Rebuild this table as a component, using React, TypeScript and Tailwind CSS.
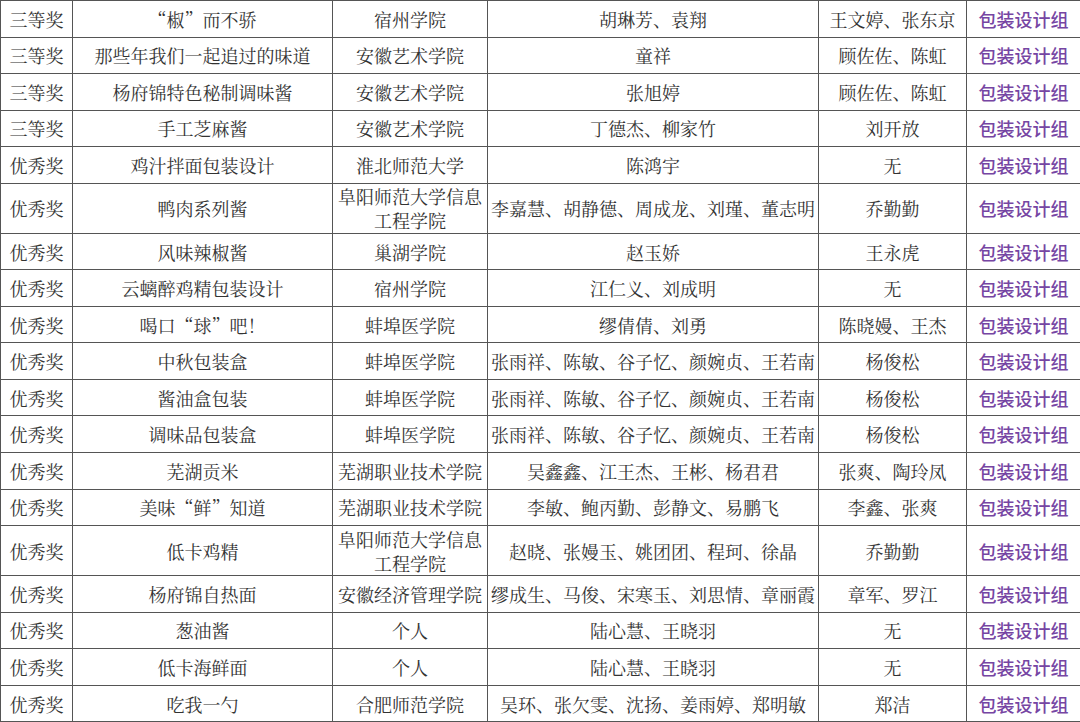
const rows: [string, string, string, string, string, boolean?][] = [
  ['三等奖', '“椒”而不骄', '宿州学院', '胡琳芳、袁翔', '王文婷、张东京'],
  ['三等奖', '那些年我们一起追过的味道', '安徽艺术学院', '童祥', '顾佐佐、陈虹'],
  ['三等奖', '杨府锦特色秘制调味酱', '安徽艺术学院', '张旭婷', '顾佐佐、陈虹'],
  ['三等奖', '手工芝麻酱', '安徽艺术学院', '丁德杰、柳家竹', '刘开放'],
  ['优秀奖', '鸡汁拌面包装设计', '淮北师范大学', '陈鸿宇', '无'],
  ['优秀奖', '鸭肉系列酱', '阜阳师范大学信息工程学院', '李嘉慧、胡静德、周成龙、刘瑾、董志明', '乔勤勤', true],
  ['优秀奖', '风味辣椒酱', '巢湖学院', '赵玉娇', '王永虎'],
  ['优秀奖', '云螭醉鸡精包装设计', '宿州学院', '江仁义、刘成明', '无'],
  ['优秀奖', '喝口“球”吧！', '蚌埠医学院', '缪倩倩、刘勇', '陈晓嫚、王杰'],
  ['优秀奖', '中秋包装盒', '蚌埠医学院', '张雨祥、陈敏、谷子忆、颜婉贞、王若南', '杨俊松'],
  ['优秀奖', '酱油盒包装', '蚌埠医学院', '张雨祥、陈敏、谷子忆、颜婉贞、王若南', '杨俊松'],
  ['优秀奖', '调味品包装盒', '蚌埠医学院', '张雨祥、陈敏、谷子忆、颜婉贞、王若南', '杨俊松'],
  ['优秀奖', '芜湖贡米', '芜湖职业技术学院', '吴鑫鑫、江王杰、王彬、杨君君', '张爽、陶玲凤'],
  ['优秀奖', '美味“鲜”知道', '芜湖职业技术学院', '李敏、鲍丙勤、彭静文、易鹏飞', '李鑫、张爽'],
  ['优秀奖', '低卡鸡精', '阜阳师范大学信息工程学院', '赵晓、张嫚玉、姚团团、程珂、徐晶', '乔勤勤', true],
  ['优秀奖', '杨府锦自热面', '安徽经济管理学院', '缪成生、马俊、宋寒玉、刘思情、章丽霞', '章军、罗江'],
  ['优秀奖', '葱油酱', '个人', '陆心慧、王晓羽', '无'],
  ['优秀奖', '低卡海鲜面', '个人', '陆心慧、王晓羽', '无'],
  ['优秀奖', '吃我一勺', '合肥师范学院', '吴环、张欠雯、沈扬、姜雨婷、郑明敏', '郑洁'],
]

const cell = 'border border-[#555] text-center align-middle p-0 whitespace-nowrap'

export default function App() {
  return (
    <div
      className="w-[1080px] h-[722px] overflow-hidden bg-white text-[18px] leading-[24px] text-[#333]"
      style={{ fontFamily: '"Noto Serif CJK SC", "Liberation Serif", "Noto Sans CJK SC", serif' }}
    >
      <table className="border-collapse table-fixed w-[1080px]">
        <colgroup>
          <col className="w-[72px]" />
          <col className="w-[260px]" />
          <col className="w-[155px]" />
          <col className="w-[331px]" />
          <col className="w-[148px]" />
          <col className="w-[114px]" />
        </colgroup>
        <tbody>
          {rows.map((r, i) => (
            <tr key={i} className={r[5] ? 'h-[50px]' : 'h-[36.55px]'}>
              <td className={cell}>{r[0]}</td>
              <td className={cell}>{r[1]}</td>
              <td className={cell}>
                {r[5] ? (
                  <>
                    阜阳师范大学信息
                    <br />
                    工程学院
                  </>
                ) : (
                  r[2]
                )}
              </td>
              <td className={cell}>{r[3]}</td>
              <td className={cell}>{r[4]}</td>
              <td
                className={cell + ' text-[#7645a3] font-medium'}
                style={{ fontFamily: '"Noto Sans CJK SC", sans-serif' }}
              >
                包装设计组
              </td>
            </tr>
          ))}
        </tbody>
      </table>
    </div>
  )
}
